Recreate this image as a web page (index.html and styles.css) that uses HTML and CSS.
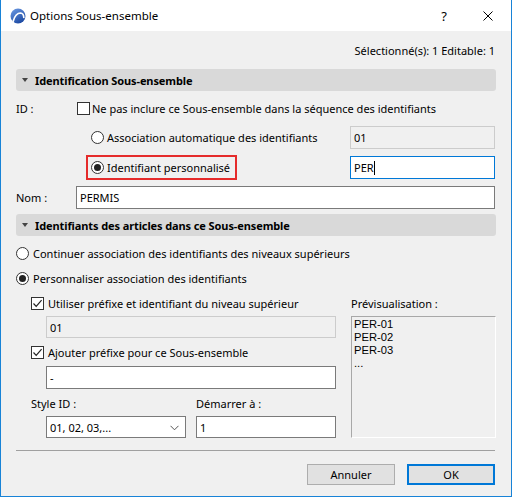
FILE: index.html
```html
<!DOCTYPE html>
<html lang="fr">
<head>
<meta charset="utf-8">
<title>Options Sous-ensemble</title>
<link rel="stylesheet" href="styles.css">
</head>
<body>
<div class="window">
  <div class="titlebar">
    <svg class="logo" width="16" height="16" viewBox="0 0 16 16">
      <defs>
        <linearGradient id="lg" x1="0" y1="0" x2="0.6" y2="1">
          <stop offset="0" stop-color="#6f9de6"/>
          <stop offset="1" stop-color="#1d4aa3"/>
        </linearGradient>
      </defs>
      <circle cx="8" cy="8" r="7.5" fill="url(#lg)"/>
      <path d="M3.2 13.2 Q5.5 5 10.5 5 Q13.6 5.2 13.8 9.5" stroke="#fff" stroke-width="1.7" fill="none" stroke-linecap="round"/>
    </svg>
    <span class="title">Options Sous-ensemble</span>
    <span class="tb-btn help">?</span>
    <span class="tb-btn close">
      <svg width="10" height="10" viewBox="0 0 10 10"><path d="M0.5 0.5 L9.5 9.5 M9.5 0.5 L0.5 9.5" stroke="#000" stroke-width="1"/></svg>
    </span>
  </div>

  <div class="content">
    <div class="status">Sélectionné(s): 1 Editable: 1</div>

    <div class="section-head"><span class="tri"></span>Identification Sous-ensemble</div>

    <div class="id-grid">
      <div class="row id-row">
        <span class="lbl">ID :</span>
        <label class="opt"><span class="cb"></span>Ne pas inclure ce Sous-ensemble dans la séquence des identifiants</label>
      </div>
      <div class="row r1">
        <span class="lbl"></span>
        <div class="mid"><label class="opt"><span class="rb"></span>Association automatique des identifiants</label></div>
        <div class="field disabled">01</div>
      </div>
      <div class="row r2">
        <span class="lbl"></span>
        <div class="mid"><label class="opt hl"><span class="rb on"></span>Identifiant personnalisé</label></div>
        <div class="field focus">PER<span class="caret"></span></div>
      </div>
      <div class="row nom">
        <span class="lbl">Nom :</span>
        <div class="field wide">PERMIS</div>
      </div>
    </div>

    <div class="section-head s2"><span class="tri"></span>Identifiants des articles dans ce Sous-ensemble</div>

    <div class="row rr"><label class="opt"><span class="rb"></span>Continuer association des identifiants des niveaux supérieurs</label></div>
    <div class="row rr rr2"><label class="opt"><span class="rb on"></span>Personnaliser association des identifiants</label></div>

    <div class="lower">
      <div class="left">
        <div class="crow"><label class="opt"><span class="cb on"><svg width="11" height="11" viewBox="0 0 11 11"><path d="M1.5 5.5 L4.2 8.3 L9.6 2.2" stroke="#222" stroke-width="1.2" fill="none"/></svg></span>Utiliser préfixe et identifiant du niveau supérieur</label></div>
        <div class="field disabled sub">01</div>
        <div class="crow c2"><label class="opt"><span class="cb on"><svg width="11" height="11" viewBox="0 0 11 11"><path d="M1.5 5.5 L4.2 8.3 L9.6 2.2" stroke="#222" stroke-width="1.2" fill="none"/></svg></span>Ajouter préfixe pour ce Sous-ensemble</label></div>
        <div class="field sub">-</div>
        <div class="pair">
          <div class="col">
            <div class="plabel">Style ID :</div>
            <div class="field select">01, 02, 03,...<svg class="chev" width="9" height="6" viewBox="0 0 9 6"><path d="M0.5 0.8 L4.5 4.8 L8.5 0.8" stroke="#555" stroke-width="1" fill="none"/></svg></div>
          </div>
          <div class="col col2">
            <div class="plabel">Démarrer à :</div>
            <div class="field start">1</div>
          </div>
        </div>
      </div>
      <div class="right">
        <div class="plabel pv">Prévisualisation :</div>
        <div class="preview">
          <div class="pl">PER-01</div>
          <div class="pl">PER-02</div>
          <div class="pl">PER-03</div>
          <div class="pl">...</div>
        </div>
      </div>
    </div>

    <div class="sep"></div>

    <div class="buttons">
      <span class="btn">Annuler</span>
      <span class="btn ok">OK</span>
    </div>
  </div>
</div>
</body>
</html>
```

FILE: styles.css
```css
* { box-sizing: border-box; }
html, body { margin: 0; padding: 0; background: #fff; }
body {
  font-family: "Noto Sans", "Open Sans", "DejaVu Sans", sans-serif;
  font-size: 11px;
  color: #000;
}
.window {
  width: 512px;
  height: 497px;
  border: 1px solid #1883d7;
  border-top: none;
  background: #f0f0f0;
  display: flex;
  flex-direction: column;
  overflow: hidden;
}
.titlebar {
  height: 31px;
  background: #fff;
  display: flex;
  align-items: center;
  padding-left: 9px;
  flex: none;
  font-size: 11.5px;
}
.logo { flex: none; }
.title { margin-left: 4px; flex: 1; }
.tb-btn {
  width: 46px;
  height: 31px;
  display: flex;
  align-items: center;
  justify-content: center;
}
.help { font-size: 13px; padding-left: 4px; }

.content { padding: 0 15px; }
.status {
  height: 38px;
  display: flex;
  align-items: center;
  justify-content: flex-end;
  padding-right: 1px;
}
.section-head {
  height: 22px;
  background: #d9d9d9;
  border-radius: 3px;
  display: flex;
  align-items: center;
  padding-left: 6px;
  font-weight: 700;
  letter-spacing: -0.1px;
}
.tri {
  width: 0; height: 0;
  border-left: 3.5px solid transparent;
  border-right: 3.5px solid transparent;
  border-top: 4px solid #444;
  margin-right: 7px;
}
.row { display: flex; align-items: center; }
.lbl { width: 60px; flex: none; }
.opt { display: flex; align-items: center; white-space: nowrap; }
.cb {
  width: 13px; height: 13px;
  border: 1px solid #333;
  background: #fff;
  margin-right: 2px;
  flex: none;
  display: flex; align-items: center; justify-content: center;
}
.rb {
  width: 13px; height: 13px;
  border: 1px solid #333;
  border-radius: 50%;
  background: #fff;
  margin-right: 3px;
  flex: none;
  display: flex; align-items: center; justify-content: center;
}
.rb.on::after {
  content: "";
  width: 7px; height: 7px;
  border-radius: 50%;
  background: #222;
}
.id-row { margin-top: 6px; height: 22px; }
.id-row .lbl { width: 61px; }
.mid { width: 274px; flex: none; padding-left: 10px; }
.r1 { margin-top: 7px; height: 23px; }
.r1 .opt { padding-left: 5px; }
.r2 { margin-top: 6px; height: 25px; }
.hl {
  border: 2px solid #e52b2b;
  width: 151px;
  height: 25px;
  padding-left: 3px;
}
.field {
  height: 23px;
  border: 1px solid #7a7a7a;
  background: #fff;
  display: flex;
  align-items: center;
  padding-left: 3px;
}
.id-grid .field { width: 145px; }
.field.disabled { background: #f0f0f0; border-color: #cccccc; }
.field.focus { border-color: #0078d7; }
.caret { width: 1px; height: 14px; background: #000; }
.nom { margin-top: 6px; height: 23px; }
.id-grid .field.wide { width: 419px; }
.s2 { margin-top: 5px; }
.rr { margin-top: 6px; height: 22px; }
.rr .rb { margin-right: 4px; }
.rr2 { margin-top: 3px; }

.lower { display: flex; }
.left { width: 320px; flex: none; padding-left: 15px; }
.right { margin-left: 15px; width: 145px; }
.crow { margin-top: 5px; height: 18px; display: flex; align-items: center; }
.crow .cb { margin-right: 4px; }
.field.sub { margin-top: 4px; margin-left: 15px; width: 290px; height: 22px; }
.c2 + .field.sub { margin-top: 5px; height: 23px; }
.pair { display: flex; }
.col { width: 165px; }
.col2 { width: 140px; }
.plabel { height: 18px; display: flex; align-items: center; margin-top: 5px; }
.pair .field { margin-top: 4px; width: 140px; height: 22px; }
.select { margin-left: 15px; position: relative; }
.chev { position: absolute; right: 6px; top: 8px; }
.preview {
  margin-top: 4px;
  height: 122px;
  border: 1px solid #a8a8a8;
  border-right-color: #ffffff;
  border-bottom-color: #ffffff;
  background: #f0f0f0;
  padding: 1px 0 0 2px;
  font-family: "Liberation Sans", Arial, sans-serif;
  font-size: 11.2px;
}
.pl { height: 13px; line-height: 13px; }
.sep {
  margin-top: 12px;
  height: 1px;
  background: #a0a0a0;
  margin-right: 1px;
}
.buttons {
  margin-top: 13px;
  display: flex;
  justify-content: flex-end;
  gap: 12px;
  padding-right: 1px;
}
.btn {
  width: 88px;
  height: 21px;
  border: 1px solid #adadad;
  background: #e1e1e1;
  display: flex;
  align-items: center;
  justify-content: center;
}
.btn.ok { border: 2px solid #0078d7; }
```
